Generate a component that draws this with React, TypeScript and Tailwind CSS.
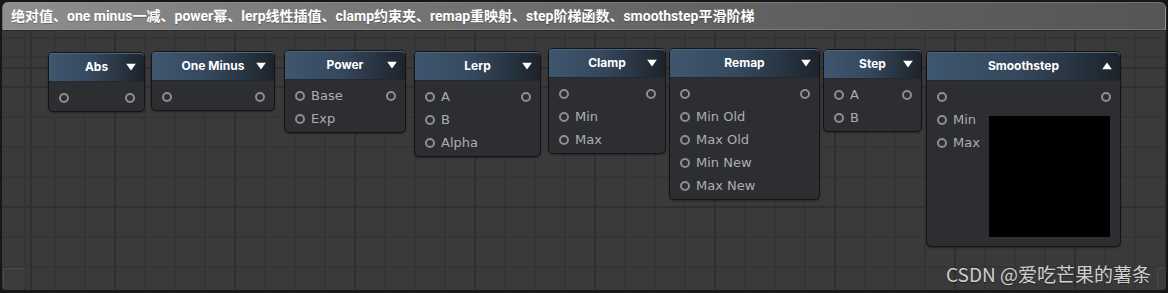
import React from "react";

type Row = { label?: string; left?: boolean; right?: boolean };

const Port = () => (
  <span className="block w-[10px] h-[10px] rounded-full border-2 border-[#8e8e8e] shrink-0" />
);

const Arrow = ({ up }: { up?: boolean }) => (
  <svg width="10" height="7" viewBox="0 0 10 7" className="absolute right-[8px] top-1/2 -translate-y-1/2">
    {up ? <polygon points="0,7 10,7 5,0" fill="#ffffff" /> : <polygon points="0,0 10,0 5,7" fill="#ffffff" />}
  </svg>
);

const Header = ({ title, up }: { title: string; up?: boolean }) => (
  <div className="relative h-[29px] flex items-center justify-center rounded-t-[4px] bg-[linear-gradient(90deg,#3e566f_0%,#35495e_45%,#1d232b_100%)] border-b border-[#25292f] shadow-[inset_0_1px_0_#4d6782]">
    <span className="text-white text-[12px] font-bold font-['Inter','Liberation_Sans',sans-serif] leading-none">{title}</span>
    <Arrow up={up} />
  </div>
);

const RowView = ({ r }: { r: Row }) => (
  <div className="h-[23px] flex items-center pl-[10px] pr-[9px]">
    {r.left !== false && <Port />}
    {r.label && (
      <span className="ml-[6px] text-[13px] leading-none text-[#adadad] font-['DejaVu_Sans',sans-serif] whitespace-nowrap">
        {r.label}
      </span>
    )}
    {r.right && (
      <span className="ml-auto">
        <Port />
      </span>
    )}
  </div>
);

const Node = ({
  title,
  x,
  y,
  w,
  rows,
}: {
  title: string;
  x: number;
  y: number;
  w: number;
  rows: Row[];
}) => (
  <div
    className="absolute rounded-[5px] border border-[#141414] bg-[#2d2e32] shadow-[0_1px_2px_rgba(0,0,0,0.35)]"
    style={{ left: x, top: y, width: w }}
  >
    <Header title={title} />
    <div className="pt-[4px] pb-[2px]">
      {rows.map((r, i) => (
        <RowView key={i} r={r} />
      ))}
    </div>
  </div>
);

export default function App() {
  return (
    <div className="w-[1168px] h-[293px] bg-[#171717] p-[2px] pb-[3px] flex flex-col font-['Roboto','Noto_Sans_CJK_SC',sans-serif]">
      <div className="h-[28px] shrink-0 rounded-t-[6px] border border-[#9a9a9a]/40 bg-[linear-gradient(90deg,#8e8e8e_0%,#747474_35%,#636363_60%,#565656_100%)] flex items-center pl-[8px]">
        <span className="text-white text-[14px] font-bold leading-none font-['Roboto','Noto_Sans_CJK_SC',sans-serif] [text-shadow:0_1px_0_rgba(0,0,0,0.25)]">
          绝对值、one minus一减、power幂、lerp线性插值、clamp约束夹、remap重映射、step阶梯函数、smoothstep平滑阶梯
        </span>
      </div>
      <div className="relative flex-1 border-t border-[#2a2a2a] rounded-b-[4px] overflow-hidden bg-[#3a3a3b] [background-image:repeating-linear-gradient(90deg,#2f2f30_0_2px,transparent_2px_120px),repeating-linear-gradient(180deg,#303031_0_2px,transparent_2px_120px),repeating-linear-gradient(90deg,#353536_0_2px,transparent_2px_30px),repeating-linear-gradient(180deg,#353536_0_2px,transparent_2px_30px)] [background-position:112px_0,0_55px,22px_0,0_25px]">
        <Node title="Abs" x={46} y={21} w={97} rows={[{ right: true }]} />
        <Node title="One Minus" x={149} y={20} w={124} rows={[{ right: true }]} />
        <Node
          title="Power"
          x={282}
          y={19}
          w={122}
          rows={[{ label: "Base", right: true }, { label: "Exp" }]}
        />
        <Node
          title="Lerp"
          x={412}
          y={20}
          w={127}
          rows={[{ label: "A", right: true }, { label: "B" }, { label: "Alpha" }]}
        />
        <Node
          title="Clamp"
          x={546}
          y={17}
          w={118}
          rows={[{ right: true }, { label: "Min" }, { label: "Max" }]}
        />
        <Node
          title="Remap"
          x={667}
          y={17}
          w={151}
          rows={[
            { right: true },
            { label: "Min Old" },
            { label: "Max Old" },
            { label: "Min New" },
            { label: "Max New" },
          ]}
        />
        <Node title="Step" x={821} y={18} w={99} rows={[{ label: "A", right: true }, { label: "B" }]} />

        {/* Smoothstep */}
        <div className="absolute left-[924px] top-[20px] w-[195px] rounded-[5px] border border-[#141414] bg-[#2d2e32] shadow-[0_1px_2px_rgba(0,0,0,0.35)]">
          <Header title="Smoothstep" up />
          <div className="pt-[4px] pb-[9px]">
            <RowView r={{ right: true }} />
            <div className="flex">
              <div className="w-[62px] shrink-0">
                <RowView r={{ label: "Min" }} />
                <RowView r={{ label: "Max" }} />
              </div>
              <div className="mt-[8px] w-[121px] h-[121px] bg-black" />
            </div>
          </div>
        </div>

        {/* corner bevels */}
        <div className="absolute left-[1px] bottom-[0px] w-[22px] h-[22px] rounded-[3px] border-t border-l border-[#4a4a4b] bg-[#3c3c3d]" />
        <div className="absolute right-[0px] bottom-[0px] w-[9px] h-[23px] rounded-[3px] border-t border-l border-[#4a4a4b] bg-[#3c3c3d]" />

        <div className="absolute right-[15px] bottom-[7px] text-[19px] leading-none text-[#cfcfcf] font-['Noto_Sans_CJK_SC',sans-serif] [text-shadow:0_1px_1px_rgba(0,0,0,0.4)]">
          CSDN @爱吃芒果的薯条
        </div>
      </div>
    </div>
  );
}
